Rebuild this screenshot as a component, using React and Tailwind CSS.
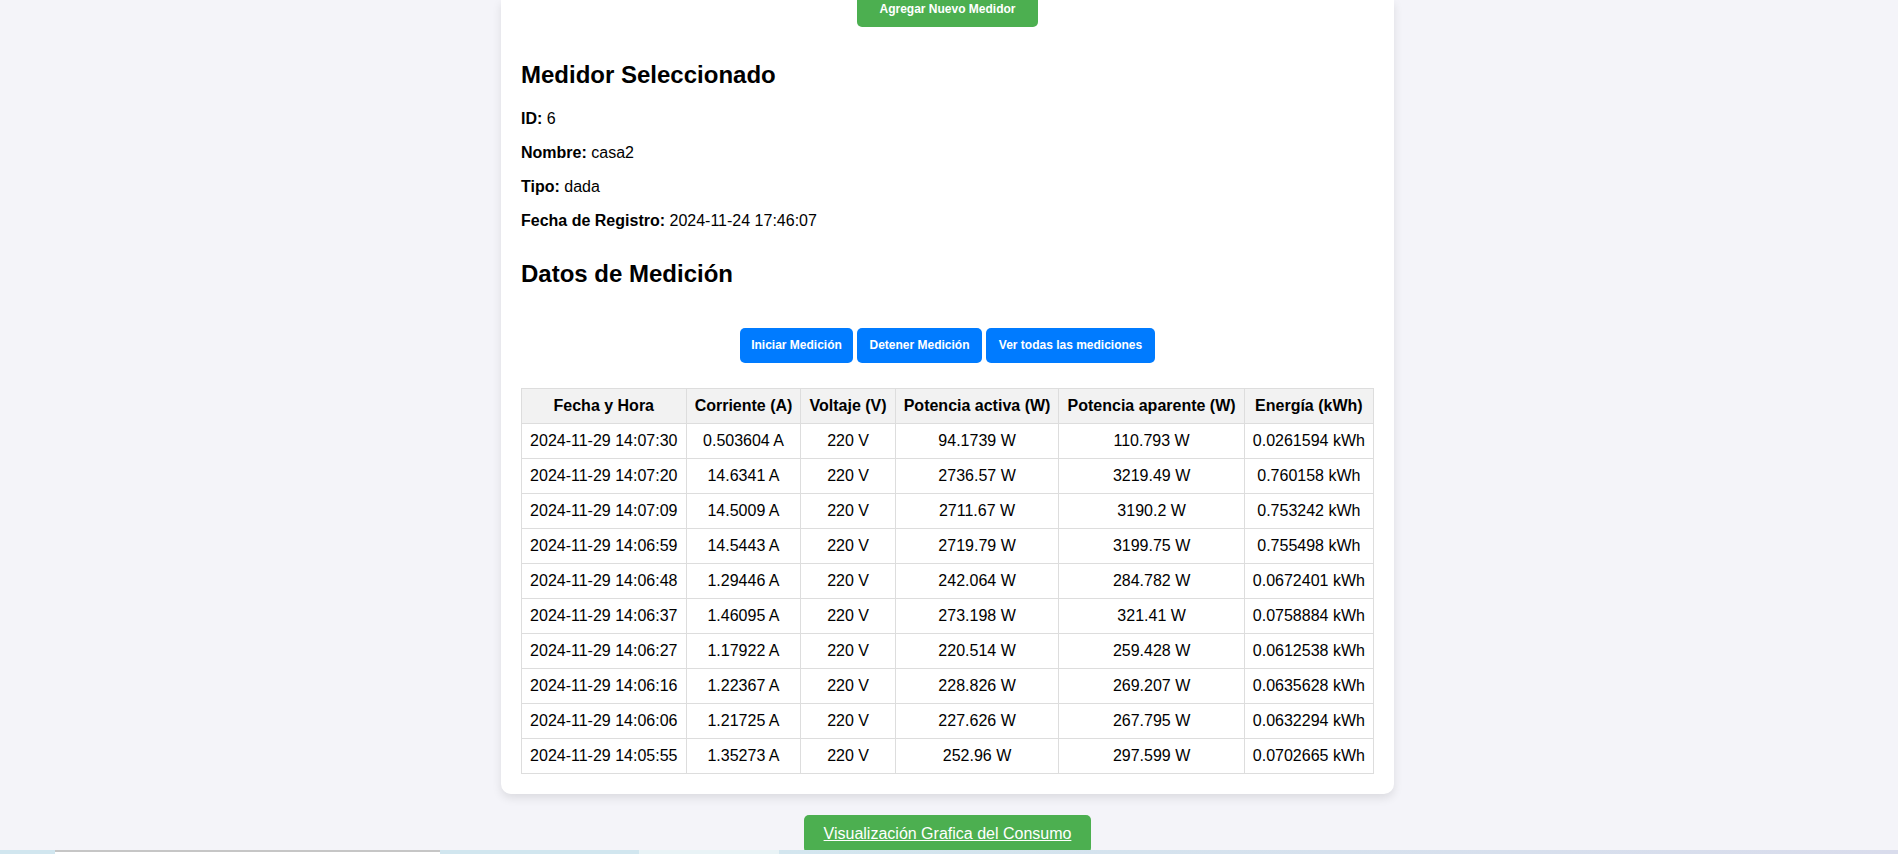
import React from 'react';

const medidor = [
  { label: 'ID:', value: '6' },
  { label: 'Nombre:', value: 'casa2' },
  { label: 'Tipo:', value: 'dada' },
  { label: 'Fecha de Registro:', value: '2024-11-24 17:46:07' },
];

const columnas = [
  'Fecha y Hora',
  'Corriente (A)',
  'Voltaje (V)',
  'Potencia activa (W)',
  'Potencia aparente (W)',
  'Energía (kWh)',
];

const mediciones = [
  ['2024-11-29 14:07:30', '0.503604 A', '220 V', '94.1739 W', '110.793 W', '0.0261594 kWh'],
  ['2024-11-29 14:07:20', '14.6341 A', '220 V', '2736.57 W', '3219.49 W', '0.760158 kWh'],
  ['2024-11-29 14:07:09', '14.5009 A', '220 V', '2711.67 W', '3190.2 W', '0.753242 kWh'],
  ['2024-11-29 14:06:59', '14.5443 A', '220 V', '2719.79 W', '3199.75 W', '0.755498 kWh'],
  ['2024-11-29 14:06:48', '1.29446 A', '220 V', '242.064 W', '284.782 W', '0.0672401 kWh'],
  ['2024-11-29 14:06:37', '1.46095 A', '220 V', '273.198 W', '321.41 W', '0.0758884 kWh'],
  ['2024-11-29 14:06:27', '1.17922 A', '220 V', '220.514 W', '259.428 W', '0.0612538 kWh'],
  ['2024-11-29 14:06:16', '1.22367 A', '220 V', '228.826 W', '269.207 W', '0.0635628 kWh'],
  ['2024-11-29 14:06:06', '1.21725 A', '220 V', '227.626 W', '267.795 W', '0.0632294 kWh'],
  ['2024-11-29 14:05:55', '1.35273 A', '220 V', '252.96 W', '297.599 W', '0.0702665 kWh'],
];

const acciones = [
  { label: 'Iniciar Medición', w: 'w-[113px]' },
  { label: 'Detener Medición', w: 'w-[125px]' },
  { label: 'Ver todas las mediciones', w: 'w-[169px]' },
];

export default function App() {
  return (
    <div className="h-[854px] overflow-hidden bg-[#f4f4f9] text-black font-['Liberation_Sans',Arial,sans-serif]">
      <div className="flex flex-col items-center pr-[3px]">
        {/* Tarjeta del medidor (la parte superior queda fuera de la vista) */}
        <div className="flex flex-col w-[893px] bg-white rounded-b-[10px] shadow-[0_4px_10px_rgba(0,0,0,0.1)] px-[20px] pb-[20px]">
          <div className="flex justify-center -mt-[8px]">
            <button className="w-[181px] bg-[#4caf50] text-white text-[12px] font-bold leading-[15px] py-[10px] rounded-[5px]">
              Agregar Nuevo Medidor
            </button>
          </div>

          <h2 className="mt-[34px] text-[24px] leading-[28px] font-bold">Medidor Seleccionado</h2>
          <div className="mt-[21px] flex flex-col gap-[16px] text-[16px] leading-[18px]">
            {medidor.map((m) => (
              <p key={m.label}>
                <strong>{m.label}</strong> {m.value}
              </p>
            ))}
          </div>

          <h2 className="mt-[30px] text-[24px] leading-[28px] font-bold">Datos de Medición</h2>

          <div className="mt-[40px] flex justify-center gap-[4px]">
            {acciones.map((b) => (
              <button
                key={b.label}
                className={
                  'bg-[#007bff] text-white text-[12px] font-bold leading-[15px] py-[10px] rounded-[5px] ' + b.w
                }
              >
                {b.label}
              </button>
            ))}
          </div>

          <table className="mt-[25px] w-full border-collapse text-[16px] leading-[18px] text-center">
            <thead>
              <tr className="bg-[#f2f2f2]">
                {columnas.map((c) => (
                  <th key={c} className="border border-[#ddd] px-[8px] py-[8px] font-bold">
                    {c}
                  </th>
                ))}
              </tr>
            </thead>
            <tbody>
              {mediciones.map((fila) => (
                <tr key={fila[0]}>
                  {fila.map((v, i) => (
                    <td key={i} className="border border-[#ddd] px-[8px] py-[8px]">
                      {v}
                    </td>
                  ))}
                </tr>
              ))}
            </tbody>
          </table>
        </div>

        <button className="mt-[21px] bg-[#4caf50] text-white text-[16px] leading-[18px] underline px-[20px] py-[10px] rounded-[5px]">
          Visualización Grafica del Consumo
        </button>
      </div>

      {/* franja inferior superpuesta */}
      <div className="fixed bottom-0 left-0 right-0 h-[4px] flex">
        <div className="w-[55px] bg-[#d1e6ef]" />
        <div className="w-[385px] bg-white border-t-[2px] border-[#c6c6c6]" />
        <div className="w-[199px] bg-[#d1e6ef]" />
        <div className="w-[140px] bg-[#e9f3f6]" />
        <div className="flex-1 bg-gradient-to-r from-[#d3e6ef] to-[#d9dcec]" />
      </div>
    </div>
  );
}
